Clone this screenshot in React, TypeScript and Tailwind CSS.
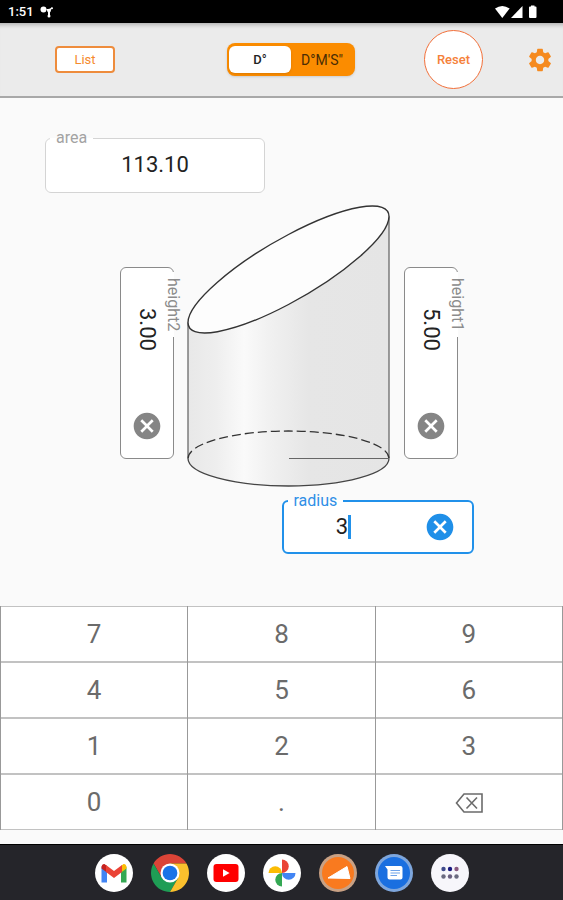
import React, { useState } from "react";
import clsx from "clsx";
import { MdCancel, MdSettings } from "react-icons/md";

type FieldName = "height1" | "height2" | "radius";

interface FieldProps {
    name: string;
    value: string;
    className?: string;
    vertical?: boolean;
    active?: boolean;
    readOnly?: boolean;
    onChange?: (value: string) => void;
    onFocus?: () => void;
}

function Field({ name, value, className, vertical, active, readOnly, onChange, onFocus }: FieldProps) {
    return (
        <fieldset
            className={clsx(
                "min-w-0 rounded-md bg-white",
                vertical && "[writing-mode:vertical-rl]",
                active ? "border-2 border-[#2191ea]" : readOnly ? "border border-[#d4d4d4]" : "border border-[#8a8a8a]",
                className,
            )}
        >
            <legend className="ms-1 px-1.5 text-base leading-4">
                <label htmlFor={name} className={active ? "text-[#2f8fe6]" : readOnly ? "text-[#a3a3a3]" : "text-[#8c8c8c]"}>
                    {name}
                </label>
            </legend>
            <div
                className={clsx(
                    "flex items-center [margin-block-start:-8px]",
                    readOnly ? "[block-size:54px]" : vertical ? "[block-size:52px]" : "[block-size:51px]",
                )}
            >
                <div className={clsx("flex flex-1 items-center justify-center", !readOnly && "me-5")}>
                    <input
                        id={name}
                        value={value}
                        readOnly={readOnly}
                        inputMode="decimal"
                        onChange={(e) => onChange?.(e.target.value)}
                        onFocus={onFocus}
                        className="bg-transparent text-center text-[22px] leading-6 text-[#222] outline-none [field-sizing:content]"
                    />
                    {active && <span className="h-6 w-[3px] bg-[#2191ea]" />}
                </div>
                {!readOnly && (
                    <button
                        aria-label={`Clear ${name}`}
                        onClick={() => onChange?.("")}
                        className={clsx("me-4", active ? "text-[#1f8fe8]" : "text-[#858585]")}
                    >
                        <MdCancel size={32} />
                    </button>
                )}
            </div>
        </fieldset>
    );
}

function Cylinder() {
    return (
        <svg width="204" height="282" viewBox="0 -1 204 282" fill="none" className="shrink-0">
            <defs>
                <linearGradient id="side" x1="0" x2="1" y1="0" y2="0">
                    <stop offset="0" stopColor="#e8e8e8" />
                    <stop offset="0.14" stopColor="#eeeeee" />
                    <stop offset="0.28" stopColor="#fafafa" />
                    <stop offset="0.4" stopColor="#f1f1f1" />
                    <stop offset="0.6" stopColor="#e6e6e6" />
                    <stop offset="1" stopColor="#e5e5e5" />
                </linearGradient>
            </defs>
            <path d="M1 116.5V252.5A100.5 27.5 0 0 0 202 252.5V10.5Z" fill="url(#side)" />
            <path d="M1 116.5V252.5M202 10.5V252.5" stroke="#6b6b6b" strokeWidth="1.3" />
            <path d="M1 252.5A100.5 27.5 0 0 0 202 252.5" stroke="#444" strokeWidth="1.3" />
            <path d="M1 252.5A100.5 27.5 0 0 1 202 252.5" stroke="#333" strokeWidth="1.3" strokeDasharray="9 4" />
            <path d="M102 252.5H202" stroke="#666" />
            <ellipse
                rx="100.5"
                ry="35"
                transform="matrix(1 -0.527 0 1 101.5 63.5)"
                fill="#fdfdfd"
                stroke="#333"
                strokeWidth="1.4"
                vectorEffect="non-scaling-stroke"
            />
        </svg>
    );
}

function StatusBar() {
    return (
        <div className="flex h-[23px] items-center bg-black pr-6 pl-2 text-white">
            <span className="text-[13px] font-medium">1:51</span>
            <svg width="14" height="12" viewBox="0 0 14 12" className="ml-1.5" fill="#fff">
                <circle cx="3.5" cy="3.5" r="3" />
                <circle cx="9" cy="4.6" r="1.9" />
                <circle cx="12" cy="2.3" r="1" />
                <path d="M6 3L9 6.2L12.2 2.3L12 1.4L9 3Z" />
                <path d="M8 5h2v5.5H8z" />
                <circle cx="9" cy="10" r="1.5" />
            </svg>
            <svg width="44" height="14" viewBox="0 0 44 14" className="ml-auto" fill="#fff">
                <path d="M0 3.6Q7.3-1.6 14.6 3.6L7.3 13Z" />
                <path d="M27.5 1V13H16Z" />
                <path d="M34 2.5Q34 1.5 35 1.5H36V0.5H39.5V1.5H40.5Q41.5 1.5 41.5 2.5V12Q41.5 13 40.5 13H35Q34 13 34 12Z" />
            </svg>
        </div>
    );
}

function Header({ dms, setDms, onReset }: { dms: boolean; setDms: (dms: boolean) => void; onReset: () => void }) {
    return (
        <header className="flex h-[75px] items-center border-b-2 border-[#a8a8a8] bg-[#ebebeb] text-[13px] font-medium shadow-[inset_0_6px_4px_-4px_rgba(0,0,0,0.25)]">
            <button className="ml-[55px] h-[27px] w-[60px] rounded border-2 border-[#ee8c3c] bg-white font-normal text-[#f58a2c]">
                List
            </button>
            <div className="ml-28 flex h-[33px] w-32 items-center rounded-lg bg-[#fb8c00] p-0.5 shadow">
                <button
                    onClick={() => setDms(false)}
                    className={clsx("h-[27px] flex-1 rounded-md text-[#222]", !dms && "bg-white shadow-sm")}
                >
                    D°
                </button>
                <button
                    onClick={() => setDms(true)}
                    className={clsx("h-[27px] flex-1 rounded-md text-sm font-normal text-[#4a2c05]", dms && "bg-white")}
                >
                    D°M'S"
                </button>
            </div>
            <div className="mr-[9px] ml-auto flex items-center gap-[43px]">
                <button onClick={onReset} className="size-[59px] rounded-full border border-[#f2703a] bg-white text-[#f5813a]">
                    Reset
                </button>
                <button aria-label="Settings" className="text-[#f58a1f]">
                    <MdSettings size={28} />
                </button>
            </div>
        </header>
    );
}

const KEYS = ["7", "8", "9", "4", "5", "6", "1", "2", "3", "0", ".", "del"];

function Keypad({ onKey }: { onKey: (key: string) => void }) {
    return (
        <div className="grid grid-cols-3 gap-x-px bg-[#999] px-px">
            {KEYS.map((key) => (
                <button
                    key={key}
                    aria-label={key === "del" ? "Backspace" : undefined}
                    onClick={() => onKey(key)}
                    className="flex h-14 items-center justify-center border-y border-[#c2c2c2] bg-white text-[26px] text-[#6b6b6b]"
                >
                    {key === "del" ? (
                        <svg width="28" height="20" viewBox="0 0 28 20" fill="none" stroke="#6b6b6b" strokeWidth="1.6" className="mt-0.5">
                            <path d="M9 1H27V19H9L1.5 10Z" />
                            <path d="M11.5 4.5L22 15.5M22 4.5L11.5 15.5" />
                        </svg>
                    ) : (
                        key
                    )}
                </button>
            ))}
        </div>
    );
}

const APPS: { name: string; icon: React.ReactNode }[] = [
    {
        name: "Gmail",
        icon: (
            <>
                <circle cx="19" cy="19" r="19" fill="#fff" />
                <path d="M6.5 13V28.5H12V17Z" fill="#4285f4" />
                <path d="M31.5 13V28.5H26V17Z" fill="#34a853" />
                <path d="M26 12V18.5L31.5 14.5V12.5Q31 9.5 28.5 10Z" fill="#fbbc04" />
                <path d="M12 12V18.5L6.5 14.5V12.5Q7 9.5 9.5 10Z" fill="#c5221f" />
                <path d="M11 11L19 17L27 11V18L19 24L11 18Z" fill="#ea4335" />
            </>
        ),
    },
    {
        name: "Chrome",
        icon: (
            <g transform="scale(0.7917)">
                <path d="M3.22 12A24 24 0 0 1 44.78 12H24L13.6 30Z" fill="#db4437" />
                <path d="M3.22 12L13.6 30H34.4L24 48A24 24 0 0 1 3.22 12Z" fill="#1f9d55" />
                <path d="M44.78 12A24 24 0 0 1 24 48L34.4 30L24 12Z" fill="#fbc02d" />
                <circle cx="24" cy="24" r="12" fill="#fff" />
                <circle cx="24" cy="24" r="9.3" fill="#1a73e8" />
            </g>
        ),
    },
    {
        name: "YouTube",
        icon: (
            <>
                <circle cx="19" cy="19" r="19" fill="#fff" />
                <rect x="6.5" y="10" width="25" height="18" rx="3" fill="#f00" />
                <path d="M16 15.2V22.8L22.6 19Z" fill="#fff" />
            </>
        ),
    },
    {
        name: "Photos",
        icon: (
            <>
                <circle cx="19" cy="19" r="19" fill="#fff" />
                <path d="M19 5.5A6.75 6.75 0 0 1 19 19Z" fill="#ea4335" />
                <path d="M32.5 19A6.75 6.75 0 0 1 19 19Z" fill="#4285f4" />
                <path d="M19 32.5A6.75 6.75 0 0 1 19 19Z" fill="#34a853" />
                <path d="M5.5 19A6.75 6.75 0 0 1 19 19Z" fill="#fbbc04" />
            </>
        ),
    },
    {
        name: "Triangle",
        icon: (
            <>
                <circle cx="19" cy="19" r="19" fill="#c9a184" />
                <circle cx="19" cy="19" r="16" fill="#f97a1f" />
                <path d="M9 24L28 12.5L31 24.5Z" fill="#fff" stroke="#fff" strokeLinejoin="round" />
            </>
        ),
    },
    {
        name: "Messages",
        icon: (
            <>
                <circle cx="19" cy="19" r="19" fill="#7ea6dc" />
                <circle cx="19" cy="19" r="16" fill="#1a6fe0" />
                <path d="M10 12H25.5Q27.5 12 27.5 14V23.5Q27.5 25.5 25.5 25.5H14.5Q12.5 25.5 12.5 23.5V15.5Z" fill="#fff" />
                <path d="M15.5 16.5H25M15.5 19H25M15.5 21.5H22" stroke="#6ea3ea" strokeWidth="1.2" />
            </>
        ),
    },
    {
        name: "All apps",
        icon: (
            <>
                <circle cx="19" cy="19" r="19" fill="#f7f6fb" />
                <circle cx="12.5" cy="15" r="2.2" fill="#3f4a8c" />
                <circle cx="19" cy="15" r="2.2" fill="#1a1a80" />
                <circle cx="25.5" cy="15" r="2.2" fill="#8a5a80" />
                <circle cx="12.5" cy="22.5" r="2.2" fill="#6a6a80" />
                <circle cx="19" cy="22.5" r="2.2" fill="#6a6080" />
                <circle cx="25.5" cy="22.5" r="2.2" fill="#6a6a80" />
            </>
        ),
    },
];

function Dock() {
    return (
        <nav className="mt-3.5 flex h-14 items-center justify-center gap-[18px] border-t border-black bg-[#25252a]">
            {APPS.map((app) => (
                <button key={app.name} aria-label={app.name}>
                    <svg width="38" height="38" viewBox="0 0 38 38">
                        {app.icon}
                    </svg>
                </button>
            ))}
        </nav>
    );
}

export default function App() {
    const [dms, setDms] = useState(false);
    const [active, setActive] = useState<FieldName>("radius");
    const [values, setValues] = useState({ height1: "5.00", height2: "3.00", radius: "3" });

    const setValue = (name: FieldName, value: string) => setValues((prev) => ({ ...prev, [name]: value }));

    // obliquely cut cylinder: base times mean height
    const result = (Math.PI * Number(values.radius) ** 2 * (Number(values.height1) + Number(values.height2))) / 2;

    const handleKey = (key: string) => {
        const current = values[active];
        setValue(active, key === "del" ? current.slice(0, -1) : current + key);
    };

    const fieldProps = (name: FieldName) => ({
        name,
        value: values[name],
        active: active === name,
        onChange: (value: string) => setValue(name, value),
        onFocus: () => setActive(name),
    });

    return (
        <div className="flex min-h-screen flex-col bg-[#fafafa] font-[Roboto,sans-serif]">
            <StatusBar />
            <Header dms={dms} setDms={setDms} onReset={() => setValues({ height1: "", height2: "", radius: "" })} />
            <main className="flex-1 pt-8">
                <Field name="area" value={result.toFixed(2)} readOnly className="ml-[45px] w-[220px]" />
                <div className="mt-3 flex items-end justify-center pl-[22px]">
                    <Field {...fieldProps("height2")} vertical className="mr-1.5 mb-7 h-[192px]" />
                    <Cylinder />
                    <Field {...fieldProps("height1")} vertical className="mb-7 ml-[13px] h-[192px]" />
                </div>
                <Field {...fieldProps("radius")} className="mt-1.5 ml-[50%] w-[192px]" />
            </main>
            <Keypad onKey={handleKey} />
            <Dock />
        </div>
    );
}
